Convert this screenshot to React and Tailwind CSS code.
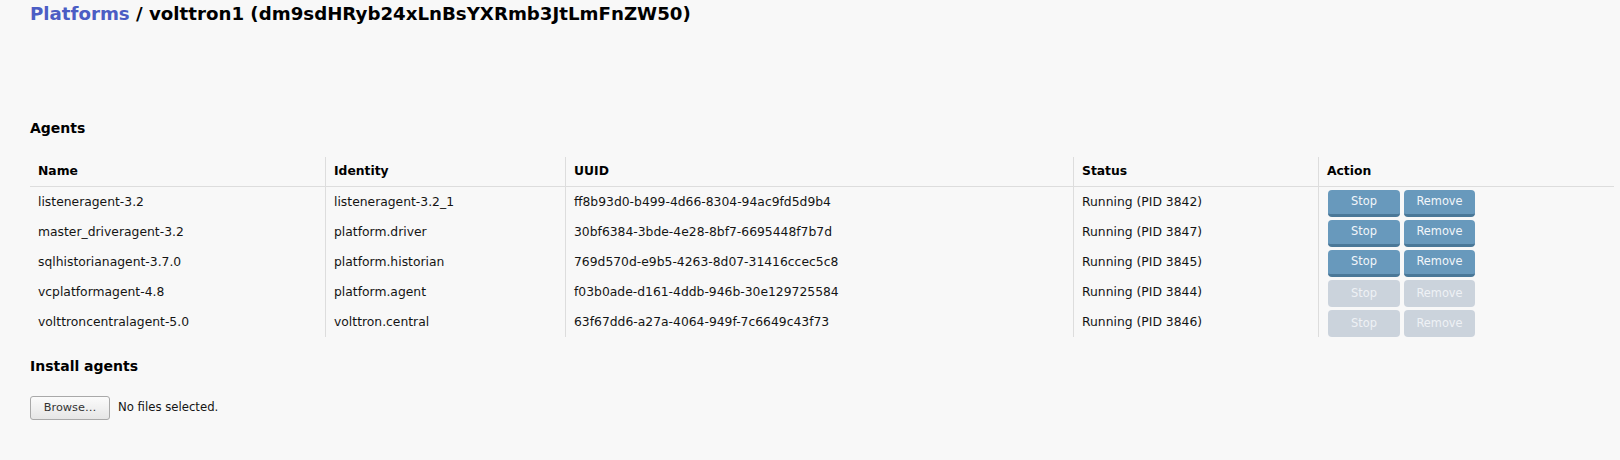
import React from 'react';

const agents = [
  { name: 'listeneragent-3.2', identity: 'listeneragent-3.2_1', uuid: 'ff8b93d0-b499-4d66-8304-94ac9fd5d9b4', pid: 3842, active: true },
  { name: 'master_driveragent-3.2', identity: 'platform.driver', uuid: '30bf6384-3bde-4e28-8bf7-6695448f7b7d', pid: 3847, active: true },
  { name: 'sqlhistorianagent-3.7.0', identity: 'platform.historian', uuid: '769d570d-e9b5-4263-8d07-31416ccec5c8', pid: 3845, active: true },
  { name: 'vcplatformagent-4.8', identity: 'platform.agent', uuid: 'f03b0ade-d161-4ddb-946b-30e129725584', pid: 3844, active: false },
  { name: 'volttroncentralagent-5.0', identity: 'volttron.central', uuid: '63f67dd6-a27a-4064-949f-7c6649c43f73', pid: 3846, active: false },
];

const rowGrid = 'grid grid-cols-[295px_240px_508px_245px_1fr] h-[30px]';

const ActionButton = ({ label, active, width }) => (
  <button
    type="button"
    disabled={!active}
    className={
      active
        ? `${width} h-[27px] rounded-[4px] bg-[#6899bc] border-b-[3px] border-[#4a7898] text-[#f2f6fa] text-[11.4px] leading-none`
        : `${width} h-[27px] rounded-[4px] bg-[#cbd3dc] text-[#eef1f5] text-[11.4px] leading-none`
    }
  >
    {label}
  </button>
);

const App = () => {
  return (
    <div className="min-h-[460px] bg-[#f8f8f8] pl-[30px] font-['DejaVu_Sans',sans-serif] text-[#141414]">
      <h1 className="pt-[2px] text-[18.2px] leading-[24px] font-bold text-black">
        <span className="text-[#4b5dc4]">Platforms</span> / volttron1 (dm9sdHRyb24xLnBsYXRmb3JtLmFnZW50)
      </h1>

      <h2 className="mt-[92px] text-[14px] leading-[20px] font-bold text-black">Agents</h2>

      <div className="mt-[19px] w-[1584px] text-[12.35px]">
        <div className={`${rowGrid} border-b border-[#dddddd] font-bold text-black`}>
          <div className="flex items-center pl-2">Name</div>
          <div className="flex items-center pl-2 border-l border-[#dddddd]">Identity</div>
          <div className="flex items-center pl-2 border-l border-[#dddddd]">UUID</div>
          <div className="flex items-center pl-2 border-l border-[#dddddd]">Status</div>
          <div className="flex items-center pl-2 border-l border-[#dddddd]">Action</div>
        </div>
        {agents.map((a) => (
          <div key={a.uuid} className={rowGrid}>
            <div className="flex items-center pl-2">{a.name}</div>
            <div className="flex items-center pl-2 border-l border-[#dddddd]">{a.identity}</div>
            <div className="flex items-center pl-2 border-l border-[#dddddd]">{a.uuid}</div>
            <div className="flex items-center pl-2 border-l border-[#dddddd]">Running (PID {a.pid})</div>
            <div className="flex items-start gap-1 pt-[3px] pl-[9px] border-l border-[#dddddd]">
              <ActionButton label="Stop" active={a.active} width="w-[72px]" />
              <ActionButton label="Remove" active={a.active} width="w-[71px]" />
            </div>
          </div>
        ))}
      </div>

      <h2 className="mt-[19px] text-[14px] leading-[20px] font-bold text-black">Install agents</h2>

      <div className="mt-[20px] flex items-center gap-2">
        <button
          type="button"
          className="w-[80px] h-[24px] rounded-[3px] border border-[#a9a9a9] bg-gradient-to-b from-[#fbfbfb] to-[#e6e6e6] text-[11.3px] text-[#333]"
        >
          Browse…
        </button>
        <span className="text-[11.7px] text-[#141414]">No files selected.</span>
      </div>
    </div>
  );
};

export default App;
